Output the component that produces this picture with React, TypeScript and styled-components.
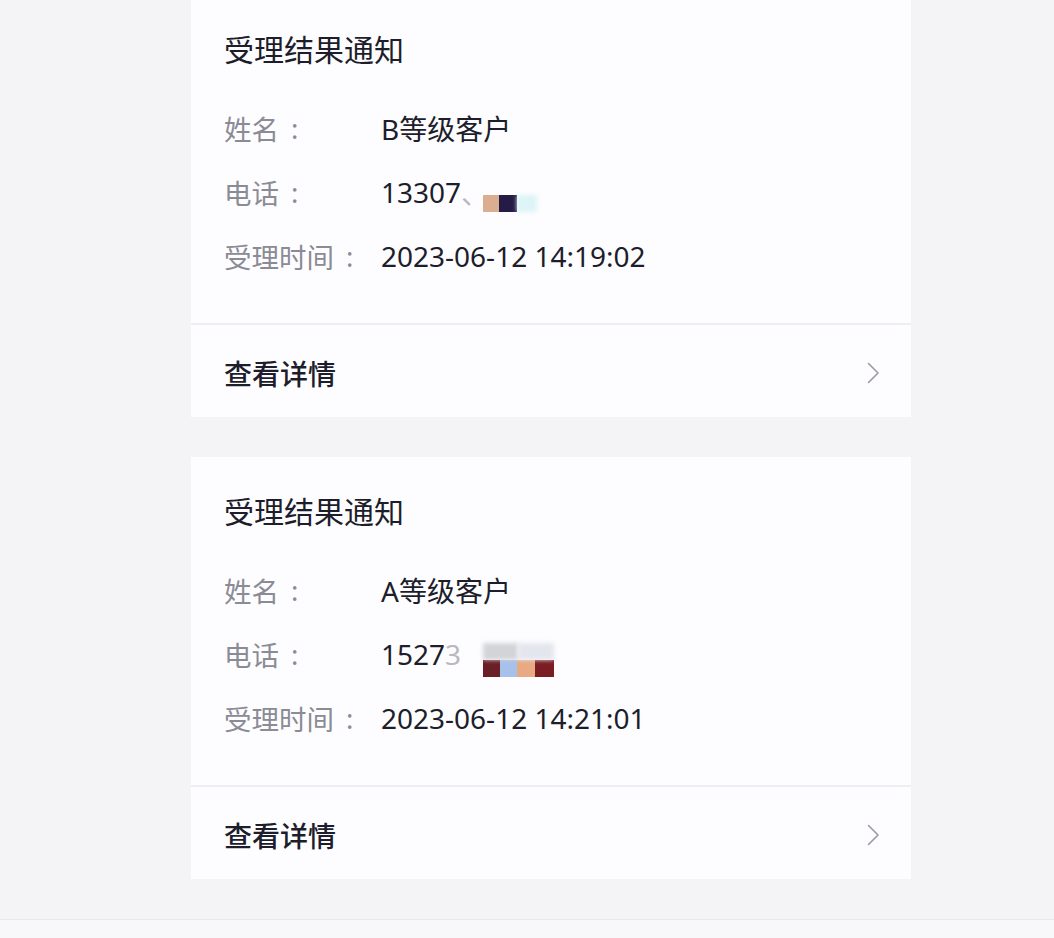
import React from "react";
import styled, { createGlobalStyle } from "styled-components";

const GlobalStyle = createGlobalStyle`
  html, body {
    margin: 0;
    padding: 0;
    background: #f4f4f7;
  }
  body {
    font-family: "Noto Sans", "Noto Sans CJK SC", sans-serif;
    -webkit-font-smoothing: antialiased;
  }
`;

const Page = styled.div`
  width: 1054px;
  height: 938px;
  overflow: hidden;
  background: #f4f4f7;
  display: flex;
  flex-direction: column;
`;

const List = styled.div`
  display: flex;
  flex-direction: column;
  gap: 40px;
  margin-top: -5px;
  padding-left: 191px;
  width: 720px;
`;

const Card = styled.section`
  background: #fdfdff;
  display: flex;
  flex-direction: column;
`;

const CardBody = styled.div`
  padding: 32px 33px 35px 33px;
  display: flex;
  flex-direction: column;
`;

const Title = styled.h2`
  margin: 0 0 27px 0;
  font-family: "Noto Sans CJK SC", sans-serif;
  font-size: 30px;
  line-height: 42px;
  font-weight: 400;
  color: #1d1d2b;
`;

const Row = styled.div`
  display: grid;
  grid-template-columns: 157px 1fr;
  align-items: center;
  height: 64px;
`;

const Label = styled.span`
  font-family: "Noto Sans CJK SC", sans-serif;
  font-size: 27.5px;
  color: #8b8b95;
  white-space: nowrap;
  display: flex;
  align-items: center;
`;

const Colon = styled.span`
  font-family: "Noto Sans", sans-serif;
  margin-left: 12px;
  color: #8b8b95;
`;

const Value = styled.span`
  font-family: "Noto Sans", "Noto Sans CJK SC", sans-serif;
  font-size: 28px;
  color: #1d1d2b;
  display: flex;
  align-items: center;
  white-space: nowrap;
`;

const Faint = styled.span`
  color: #b8b8c0;
`;

const Mosaic = styled.span<{ $offset: number; $top: number }>`
  display: inline-flex;
  flex-direction: column;
  margin-left: ${(p) => p.$offset}px;
  margin-top: ${(p) => p.$top}px;
`;

const MosaicRow = styled.span`
  display: flex;
`;

const Tile = styled.span<{ $c: string; $w: number; $blur?: boolean }>`
  display: block;
  width: ${(p) => p.$w}px;
  height: 17px;
  background: ${(p) => p.$c};
  filter: ${(p) => (p.$blur ? "blur(2px)" : "none")};
`;

const Divider = styled.hr`
  margin: 0;
  border: 0;
  height: 2px;
  background: #eeeef2;
`;

const LinkRow = styled.div`
  height: 88px;
  padding: 4px 31px 0 33px;
  display: flex;
  align-items: center;
  justify-content: space-between;
`;

const LinkText = styled.span`
  font-family: "Noto Sans CJK SC", sans-serif;
  font-size: 28px;
  font-weight: 500;
  color: #1d1d2b;
`;

const Footer = styled.div`
  margin-top: 40px;
  flex: 1;
  border-top: 1px solid #e9e9ed;
  background: #f8f8fa;
`;

const Chevron = () => (
  <svg width="13" height="22" viewBox="0 0 13 22" fill="none">
    <polyline
      points="1.5,1.5 11,11 1.5,20.5"
      stroke="#9a9aa2"
      strokeWidth="1.6"
      strokeLinecap="round"
      strokeLinejoin="round"
    />
  </svg>
);

type Item = {
  name: string;
  phone: React.ReactNode;
  time: string;
};

const items: Item[] = [
  {
    name: "B等级客户",
    phone: (
      <>
        13307<Faint>、</Faint>
        <Mosaic $offset={-6} $top={22}>
          <MosaicRow>
            <Tile $c="#dcae90" $w={16} />
            <Tile $c="#241b47" $w={18} />
            <Tile $c="#dcf4f7" $w={20} $blur />
          </MosaicRow>
        </Mosaic>
      </>
    ),
    time: "2023-06-12 14:19:02",
  },
  {
    name: "A等级客户",
    phone: (
      <>
        1527<Faint>3</Faint>
        <Mosaic $offset={22} $top={12}>
          <MosaicRow>
            <Tile $c="#d3d4d8" $w={35} $blur />
            <Tile $c="#e4e6ee" $w={36} $blur />
          </MosaicRow>
          <MosaicRow>
            <Tile $c="#6a1f26" $w={17} />
            <Tile $c="#a6c1ea" $w={17} />
            <Tile $c="#e8a983" $w={18} />
            <Tile $c="#7a1d23" $w={19} />
          </MosaicRow>
        </Mosaic>
      </>
    ),
    time: "2023-06-12 14:21:01",
  },
];

const Field = ({ label, children }: { label: string; children: React.ReactNode }) => (
  <Row>
    <Label>
      {label}
      <Colon>:</Colon>
    </Label>
    <Value>{children}</Value>
  </Row>
);

const NoticeCard = ({ item }: { item: Item }) => (
  <Card>
    <CardBody>
      <Title>受理结果通知</Title>
      <Field label="姓名">{item.name}</Field>
      <Field label="电话">{item.phone}</Field>
      <Field label="受理时间">{item.time}</Field>
    </CardBody>
    <Divider />
    <LinkRow>
      <LinkText>查看详情</LinkText>
      <Chevron />
    </LinkRow>
  </Card>
);

export default function App() {
  return (
    <>
      <GlobalStyle />
      <Page>
        <List>
          {items.map((it, i) => (
            <NoticeCard key={i} item={it} />
          ))}
        </List>
        <Footer />
      </Page>
    </>
  );
}
